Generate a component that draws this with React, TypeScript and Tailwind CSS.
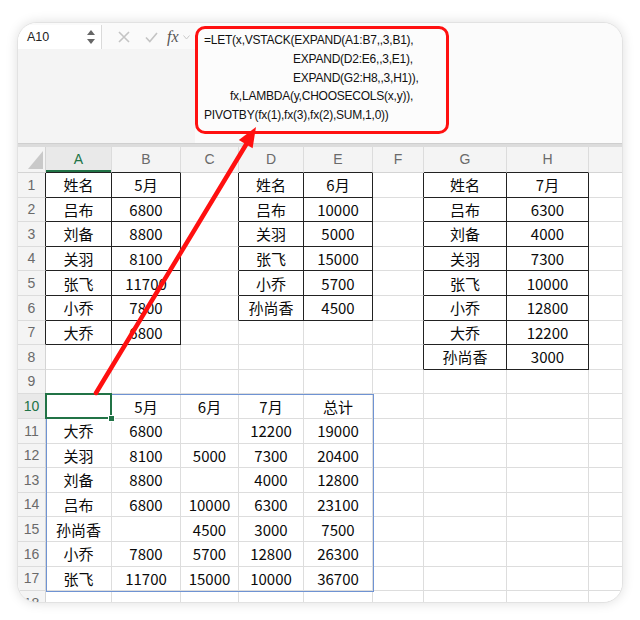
import React from "react";

type Cell = string;
const data: Record<number, Cell[]> = {
  1: ["姓名", "5月", "", "姓名", "6月", "", "姓名", "7月", ""],
  2: ["吕布", "6800", "", "吕布", "10000", "", "吕布", "6300", ""],
  3: ["刘备", "8800", "", "关羽", "5000", "", "刘备", "4000", ""],
  4: ["关羽", "8100", "", "张飞", "15000", "", "关羽", "7300", ""],
  5: ["张飞", "11700", "", "小乔", "5700", "", "张飞", "10000", ""],
  6: ["小乔", "7800", "", "孙尚香", "4500", "", "小乔", "12800", ""],
  7: ["大乔", "6800", "", "", "", "", "大乔", "12200", ""],
  8: ["", "", "", "", "", "", "孙尚香", "3000", ""],
  9: ["", "", "", "", "", "", "", "", ""],
  10: ["", "5月", "6月", "7月", "总计", "", "", "", ""],
  11: ["大乔", "6800", "", "12200", "19000", "", "", "", ""],
  12: ["关羽", "8100", "5000", "7300", "20400", "", "", "", ""],
  13: ["刘备", "8800", "", "4000", "12800", "", "", "", ""],
  14: ["吕布", "6800", "10000", "6300", "23100", "", "", "", ""],
  15: ["孙尚香", "", "4500", "3000", "7500", "", "", "", ""],
  16: ["小乔", "7800", "5700", "12800", "26300", "", "", "", ""],
  17: ["张飞", "11700", "15000", "10000", "36700", "", "", "", ""],
  18: ["", "", "", "", "", "", "", "", ""],
};

const letters = ["", "A", "B", "C", "D", "E", "F", "G", "H", ""];

const ranges = [
  { r1: 1, r2: 7, c1: 1, c2: 2 },
  { r1: 1, r2: 6, c1: 4, c2: 5 },
  { r1: 1, r2: 8, c1: 7, c2: 8 },
];
const inRange = (r: number, c: number) =>
  ranges.some((g) => r >= g.r1 && r <= g.r2 && c >= g.c1 && c <= g.c2);

const FORMULA = [
  { t: "=LET(x,VSTACK(EXPAND(A1:B7,,3,B1),", ml: "ml-0" },
  { t: "EXPAND(D2:E6,,3,E1),", ml: "ml-[89px]" },
  { t: "EXPAND(G2:H8,,3,H1)),", ml: "ml-[89px]" },
  { t: "fx,LAMBDA(y,CHOOSECOLS(x,y)),", ml: "ml-[26px]" },
  { t: "PIVOTBY(fx(1),fx(3),fx(2),SUM,1,0))", ml: "ml-0" },
];

function HeaderCell({ c }: { c: number }) {
  if (c === 0) {
    return (
      <div className="relative h-[26px] bg-[#f4f4f4] border-r border-r-[#d4d4d4] border-b border-b-[#d4d4d4]">
        <svg className="absolute right-[2px] bottom-[3px]" width="15" height="18" viewBox="0 0 15 18">
          <polygon points="15,0 15,18 0,18" fill="#c9c9c9" />
        </svg>
      </div>
    );
  }
  const isA = c === 1;
  const bottomBlack = inRange(1, c);
  return (
    <div
      className={
        "relative h-[26px] flex items-center justify-center text-[14px] [font-family:'Liberation_Sans',sans-serif] border-r border-r-[#dcdcdc] border-b " +
        (isA ? "bg-[#e9e9e9] text-[#217346] " : "bg-[#f4f4f4] text-[#6a6a6a] ") +
        (bottomBlack ? "border-b-[#222222]" : "border-b-[#d4d4d4]")
      }
    >
      {letters[c]}
      {isA && <div className="absolute left-0 right-0 bottom-0 h-[2px] bg-[#217346]" />}
    </div>
  );
}

function RowHeader({ r }: { r: number }) {
  const sel = r === 10;
  const rightBlack = inRange(r, 1);
  return (
    <div
      className={
        "h-[24.6px] flex items-end justify-center pb-[1px] text-[14px] [font-family:'Liberation_Sans',sans-serif] border-b border-b-[#dcdcdc] border-r " +
        (sel ? "bg-[#e9e9e9] text-[#217346] " : "bg-[#f4f4f4] text-[#6a6a6a] ") +
        (rightBlack ? "border-r-[#222222]" : "border-r-[#d4d4d4]")
      }
    >
      {r}
    </div>
  );
}

function DataCell({ r, c, v }: { r: number; c: number; v: string }) {
  const rightBlack = inRange(r, c) || inRange(r, c + 1);
  const bottomBlack = inRange(r, c) || inRange(r + 1, c);
  return (
    <div
      className={
        "h-[24.6px] flex items-center justify-center bg-white text-[15px] leading-none text-[#0a0a0a] whitespace-nowrap overflow-hidden [font-family:'Noto_Sans_CJK_SC',sans-serif] border-r border-b " +
        (rightBlack ? "border-r-[#222222] " : "border-r-[#dddddd] ") +
        (bottomBlack ? "border-b-[#222222]" : "border-b-[#dddddd]")
      }
    >
      {v}
    </div>
  );
}

export default function App() {
  const rows = Array.from({ length: 18 }, (_, i) => i + 1);
  return (
    <div className="relative w-[640px] h-[620px] bg-white overflow-hidden pt-[22px] pl-[17px]">
      <div className="relative w-[606px] h-[581px] rounded-[20px] overflow-hidden bg-white border border-[#e2e2e2] shadow-[0_0_12px_rgba(0,0,0,0.13)] flex flex-col">
        {/* Toolbar */}
        <div className="h-[120px] flex bg-[#f4f4f4] shrink-0">
          <div className="w-[177px] flex flex-col">
            <div className="h-[26px] flex items-stretch bg-[#fafafa] pt-[2px]">
              <div className="w-[84px] flex items-center justify-between bg-white border-r border-[#dadada] pl-[9px] pr-[6px]">
                <span className="text-[12.5px] text-[#222] [font-family:'Liberation_Sans',sans-serif]">A10</span>
                <svg width="8" height="16" viewBox="0 0 8 16">
                  <polygon points="4,1 8,6 0,6" fill="#666" />
                  <polygon points="0,10 8,10 4,15" fill="#666" />
                </svg>
              </div>
              <div className="flex-1 flex items-center pl-[16px]">
                <svg width="12" height="12" viewBox="0 0 12 12" className="mr-[15px]">
                  <path d="M1 1 L11 11 M11 1 L1 11" stroke="#c4c4c4" strokeWidth="1.6" />
                </svg>
                <svg width="13" height="11" viewBox="0 0 13 11" className="mr-[9px]">
                  <path d="M1 5.5 L4.8 9.5 L12 1" stroke="#c4c4c4" strokeWidth="1.6" fill="none" />
                </svg>
                <span className="text-[16px] italic text-[#555] [font-family:'Liberation_Serif',serif] mr-[4px]">fx</span>
                <svg width="7" height="5" viewBox="0 0 7 5">
                  <path d="M0.5 0.5 L3.5 4 L6.5 0.5" stroke="#c9c9c9" strokeWidth="1" fill="none" />
                </svg>
              </div>
            </div>
          </div>
          <div className="flex-1 bg-[#fbfbfb] pt-[3px]">
            <div className="w-[254px] h-[108px] rounded-[10px] border-[3px] border-[#ff1010] bg-[#fcfcfc] pl-[6px] pt-[2px]">
              {FORMULA.map((l, i) => (
                <div
                  key={i}
                  className={"h-[18.75px] leading-[18.75px] whitespace-pre text-[12px] tracking-[-0.23px] text-[#111111] [font-family:'Liberation_Sans',sans-serif] " + l.ml}
                >
                  {l.t}
                </div>
              ))}
            </div>
          </div>
        </div>
        {/* separator */}
        <div className="h-[4px] bg-[#dcdcdc] border-t border-[#cfcfcf] shrink-0" />
        {/* Grid */}
        <div className="relative grid grid-cols-[28px_66px_69px_58px_65px_69px_51px_83px_82px_35px]">
          {letters.map((_, c) => (
            <HeaderCell key={"h" + c} c={c} />
          ))}
          {rows.map((r) => (
            <React.Fragment key={r}>
              <RowHeader r={r} />
              {data[r].map((v, i) => (
                <DataCell key={i} r={r} c={i + 1} v={v} />
              ))}
            </React.Fragment>
          ))}
          {/* blue range A10:E17 */}
          <div className="absolute left-[27.5px] top-[246.8px] w-[328px] h-[198px] border-[1.5px] border-[#6f93d3] pointer-events-none" />
          {/* selected cell A10 */}
          <div className="absolute left-[27px] top-[246.4px] w-[67px] h-[26px] border-2 border-[#217346] pointer-events-none">
            <div className="absolute right-[-5px] bottom-[-5px] w-[7px] h-[7px] bg-[#217346] border border-white" />
          </div>
        </div>
      </div>
      {/* red arrow */}
      <svg className="absolute left-0 top-0 pointer-events-none" width="640" height="620" viewBox="0 0 640 620">
        <line x1="96" y1="393" x2="247" y2="143" stroke="#ff1010" strokeWidth="4.5" strokeLinecap="round" />
        <polygon points="256,127 252.6,148.3 238.8,140.1" fill="#ff1010" />
      </svg>
    </div>
  );
}
